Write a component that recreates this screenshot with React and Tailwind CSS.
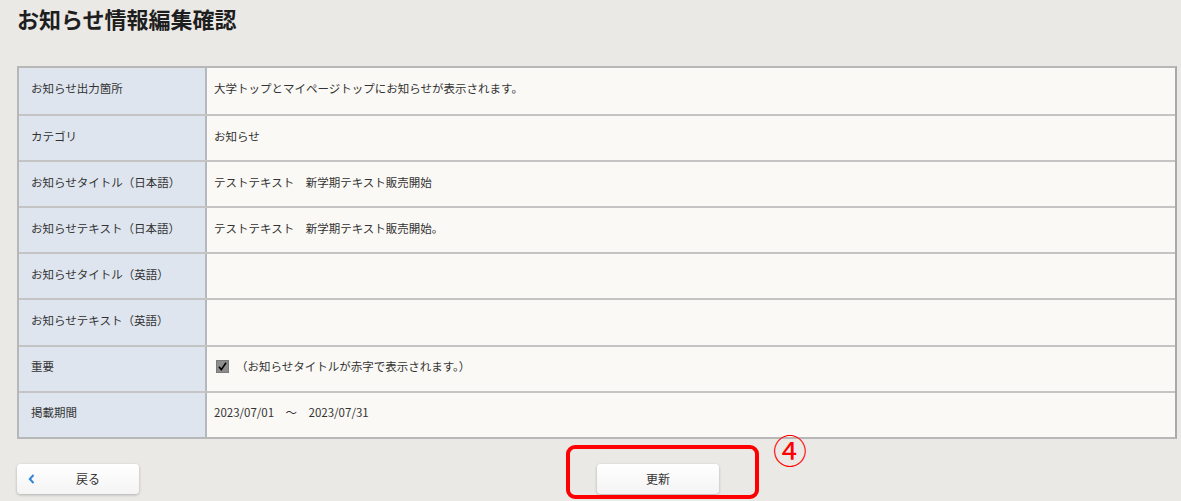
import React from 'react';

const rows = [
  { label: 'お知らせ出力箇所', value: '大学トップとマイページトップにお知らせが表示されます。' },
  { label: 'カテゴリ', value: 'お知らせ' },
  { label: 'お知らせタイトル（日本語）', value: 'テストテキスト　新学期テキスト販売開始' },
  { label: 'お知らせテキスト（日本語）', value: 'テストテキスト　新学期テキスト販売開始。' },
  { label: 'お知らせタイトル（英語）', value: '' },
  { label: 'お知らせテキスト（英語）', value: '' },
  { label: '重要', value: 'check' },
  { label: '掲載期間', value: '2023/07/01　～　2023/07/31' },
];

const font = { fontFamily: '"Noto Sans CJK JP", "Noto Sans", sans-serif' };

const App = () => {
  return (
    <div className="w-[1181px] h-[501px] bg-[#ebe9e6] text-[#333] overflow-hidden" style={font}>
      <div className="pl-[17px] pr-[4px]">
        <h1 className="pt-[3px] h-[66px] text-[22px] font-bold text-[#1e1e1e] leading-[30px]">
          お知らせ情報編集確認
        </h1>

        <div className="w-[1160px] border-2 border-[#b7b7b7] border-r-[#a8a8a8]">
          {rows.map((row, i) => (
            <div
              key={row.label}
              className={`flex h-[46.1px] ${i > 0 ? 'border-t-2 border-[#c4c4c4]' : ''}`}
            >
              <div className="w-[188px] shrink-0 bg-[#dee5ef] border-r-2 border-[#b4b8bf] flex items-center pl-[12px] pb-[4px] text-[11.5px]">
                {row.label}
              </div>
              <div className="flex-1 bg-[#faf9f5] flex items-center pl-[7px] pb-[4px] text-[11.5px]">
                {row.value === 'check' ? (
                  <div className="flex items-center">
                    <span className="w-[13px] h-[13px] ml-[2px] bg-[#8d8d8d] border border-[#7a7a7a] flex items-center justify-center">
                      <svg width="11" height="11" viewBox="0 0 11 11">
                        <path d="M2 5.8 L4.3 8.6 L9 1.8" fill="none" stroke="#000" strokeWidth="1.6" />
                      </svg>
                    </span>
                    <span className="ml-[7px]">（お知らせタイトルが赤字で表示されます。）</span>
                  </div>
                ) : (
                  row.value
                )}
              </div>
            </div>
          ))}
        </div>

        <div className="relative flex items-start mt-[25px]">
          <button className="w-[122px] h-[30px] rounded-[4px] bg-gradient-to-b from-white to-[#f4f4f4] shadow-[0_1px_3px_rgba(0,0,0,0.25)] flex items-center text-[12px] text-[#333]">
            <svg width="10" height="12" viewBox="0 0 10 12" className="ml-[10px]">
              <path d="M6.5 2 L2.8 6 L6.5 10" fill="none" stroke="#2f86d8" strokeWidth="2" />
            </svg>
            <span className="ml-[39px]">戻る</span>
          </button>

          <button className="ml-[458px] w-[122px] h-[30px] rounded-[4px] bg-gradient-to-b from-white to-[#f4f4f4] shadow-[0_1px_3px_rgba(0,0,0,0.25)] flex items-center justify-center text-[12px] text-[#333]">
            更新
          </button>

          <div className="absolute left-[549px] top-[-19px] w-[193px] h-[54px] border-[4px] border-[#ff0000] rounded-[9px]" />
          <div className="absolute left-[756px] top-[-31px] text-[34px] leading-[34px] text-[#ff0000]">④</div>
        </div>
      </div>
    </div>
  );
};

export default App;
